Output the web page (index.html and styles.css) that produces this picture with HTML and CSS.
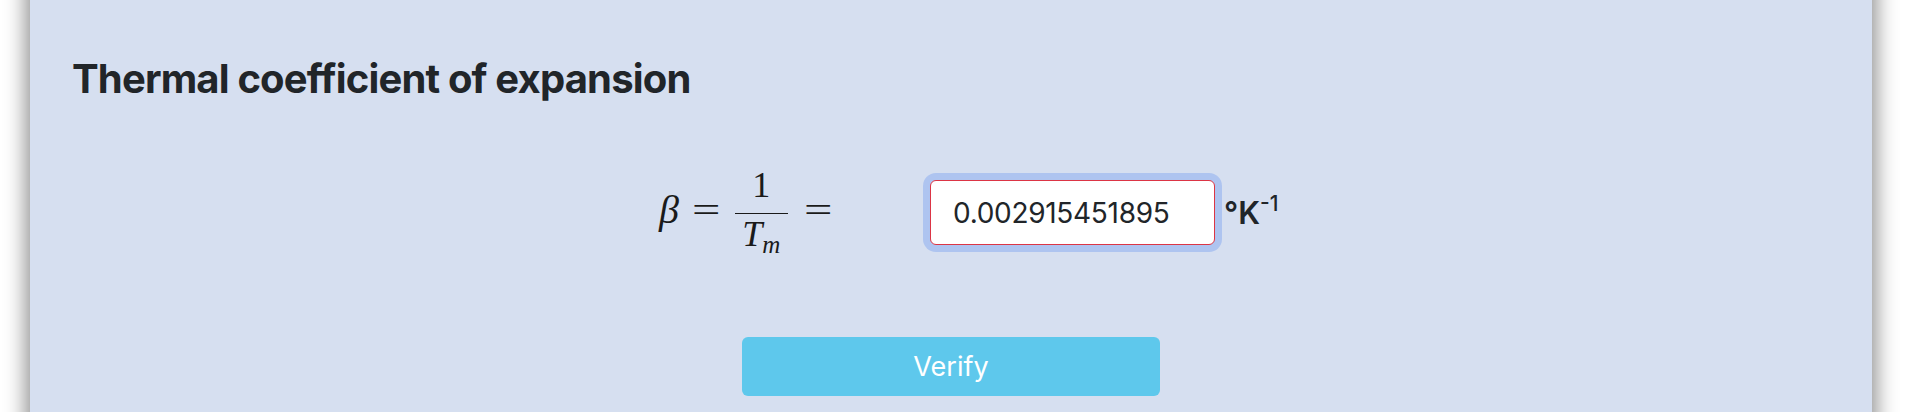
FILE: index.html
```html
<!DOCTYPE html>
<html lang="en">
<head>
<meta charset="utf-8">
<title>Thermal coefficient of expansion</title>
<link rel="stylesheet" href="styles.css">
</head>
<body>
<main class="panel">
  <h2 class="title">Thermal coefficient of expansion</h2>
  <div class="eq-row">
    <div class="math">
      <span class="mi beta">β</span>
      <span class="mo"><span class="eq">=</span></span>
      <span class="frac">
        <span class="num">1</span>
        <span class="bar"></span>
        <span class="den"><span class="mi">T</span><span class="sub mi">m</span></span>
      </span>
      <span class="mo mo-last"><span class="eq">=</span></span>
    </div>
    <input class="answer" type="text" value="0.002915451895">
    <span class="unit">°K<span class="sup">-1</span></span>
  </div>
  <div class="actions">
    <button class="verify" type="button">Verify</button>
  </div>
</main>
</body>
</html>
```

FILE: styles.css
```css
html, body {
  margin: 0;
  padding: 0;
  background: #ffffff;
  overflow: hidden;
}

body {
  font-family: Inter, "Liberation Sans", sans-serif;
  color: #212529;
}

.panel {
  box-sizing: border-box;
  width: 1842px;
  height: 520px;
  margin: -40px 0 0 30px;
  padding: 95px 42px 0 42px;
  background: #d6dff0;
  box-shadow: 0 0 20px 4px rgba(0, 0, 0, 0.45);
}

.title {
  margin: 0;
  font-size: 40px;
  line-height: 47px;
  font-weight: 700;
  letter-spacing: -0.83px;
  color: #212529;
}

.eq-row {
  display: flex;
  align-items: center;
  height: 65px;
  margin-top: 78px;
  padding-left: 587px;
}

.math {
  display: flex;
  align-items: center;
  margin-right: 94px;
  font-family: "Liberation Serif", "DejaVu Serif", serif;
  font-size: 36px;
  line-height: 36px;
  color: #1a1a1a;
}

.mi {
  font-style: italic;
}

.beta {
  width: 30px;
  padding-bottom: 6px;
  font-size: 40px;
  line-height: 36px;
}

.mo {
  width: 34px;
  padding-bottom: 6px;
  text-align: center;
}

.mo-last {
  width: 35px;
  margin-left: 13px;
}

.eq {
  display: inline-block;
  transform: scaleX(1.4);
}

.frac {
  display: flex;
  flex-direction: column;
  align-items: center;
  width: 53.5px;
  margin-left: 11.5px;
}

.num {
  padding-bottom: 9.5px;
}

.bar {
  align-self: stretch;
  height: 1px;
  background: #1a1a1a;
}

.den {
  margin-top: 2.5px;
  padding-bottom: 6px;
  white-space: nowrap;
}

.sub {
  font-size: 25px;
  line-height: 0;
  vertical-align: -7px;
}

.answer {
  box-sizing: border-box;
  width: 285px;
  height: 65px;
  margin: 0;
  padding: 0 22px;
  border: 1px solid #dc3545;
  border-radius: 6px;
  background: #ffffff;
  box-shadow: 0 0 0 7px #aec4f0;
  outline: none;
  font-family: Inter, "Liberation Sans", sans-serif;
  font-size: 28px;
  letter-spacing: -0.3px;
  color: #212529;
}

.unit {
  margin-left: 9px;
  font-size: 31px;
  line-height: 1;
  font-weight: 600;
  color: #212529;
}

.sup {
  font-size: 21px;
  line-height: 0;
  vertical-align: 13px;
  font-weight: 500;
}

.actions {
  display: flex;
  justify-content: center;
  margin-top: 92px;
}

.verify {
  width: 418px;
  height: 59px;
  border: none;
  border-radius: 6px;
  background: #5ec8ec;
  color: #ffffff;
  font-family: Inter, "Liberation Sans", sans-serif;
  font-size: 27px;
  font-weight: 400;
  padding: 0;
}
```
